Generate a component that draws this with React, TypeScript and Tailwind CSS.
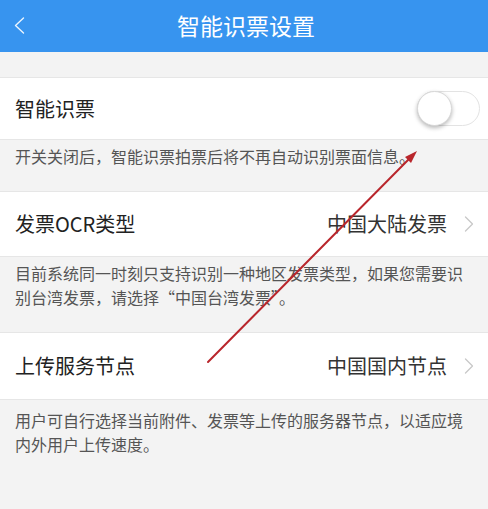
const font = { fontFamily: '"Noto Sans CJK SC", "Noto Sans", sans-serif' }

function Toggle() {
  return (
    <div className="relative w-[63px] h-[35px] rounded-full bg-white border border-[#e3e3e3]">
      <div className="absolute left-[-1px] top-[-1px] w-[35px] h-[35px] rounded-full bg-white border border-[#d8d8d8] shadow-[0_2px_4px_rgba(0,0,0,0.28)]" />
    </div>
  )
}

function Chevron() {
  return (
    <svg width="10" height="16" viewBox="0 0 10 16" fill="none">
      <polyline points="1.5,1 8.5,8 1.5,15" stroke="#c8c8c8" strokeWidth="1.3" strokeLinecap="round" strokeLinejoin="round" />
    </svg>
  )
}

function Row({ label, value, toggle, h }: { label: string; value?: string; toggle?: boolean; h: string }) {
  return (
    <div className={`flex items-center justify-between bg-white border-y border-[#e6e6e6] pl-[15px] ${toggle ? "pr-[8px]" : "pr-[14px]"} ${h}`}>
      <span className="text-[20px] text-[#222]">{label}</span>
      {toggle ? (
        <Toggle />
      ) : (
        <div className="flex items-center gap-[17px]">
          <span className="text-[20px] text-[#333]">{value}</span>
          <Chevron />
        </div>
      )}
    </div>
  )
}

function Desc({ children, h, pt }: { children: string; h: string; pt: string }) {
  return (
    <div className={`px-[15px] text-[16px] leading-[24px] text-[#555] ${h} ${pt}`}>{children}</div>
  )
}

export default function App() {
  return (
    <div className="relative w-[488px] h-[509px] overflow-hidden bg-[#f3f3f3]" style={font}>
      {/* Header */}
      <div className="relative flex items-center justify-center h-[52px] bg-[#3794ef]">
        <svg className="absolute left-[14px] top-[17px]" width="11" height="17" viewBox="0 0 11 17" fill="none">
          <polyline points="9.5,1 1.5,8.5 9.5,16" stroke="#ffffff" strokeOpacity="0.9" strokeWidth="1.4" strokeLinecap="round" strokeLinejoin="round" />
        </svg>
        <span className="text-[23px] text-white ml-[4px] mt-[-2px]">智能识票设置</span>
      </div>

      <div className="h-[25px]" />

      <Row label="智能识票" toggle h="h-[63px]" />
      <Desc h="h-[51px]" pt="pt-[4px]">开关关闭后，智能识票拍票后将不再自动识别票面信息。</Desc>

      <Row label="发票OCR类型" value="中国大陆发票" h="h-[66px]" />
      <Desc h="h-[75px]" pt="pt-[4px]">目前系统同一时刻只支持识别一种地区发票类型，如果您需要识别台湾发票，请选择“中国台湾发票”。</Desc>

      <Row label="上传服务节点" value="中国国内节点" h="h-[68px]" />
      <Desc h="h-[109px]" pt="pt-[8px]">用户可自行选择当前附件、发票等上传的服务器节点，以适应境内外用户上传速度。</Desc>

      {/* Annotation arrow */}
      <svg className="absolute left-0 top-0 pointer-events-none" width="488" height="509" viewBox="0 0 488 509">
        <line x1="208" y1="362" x2="410" y2="158" stroke="#b9262c" strokeWidth="2" strokeLinecap="round" />
        <polygon points="417,151 405,157 411,163" fill="#b9262c" />
      </svg>
    </div>
  )
}
